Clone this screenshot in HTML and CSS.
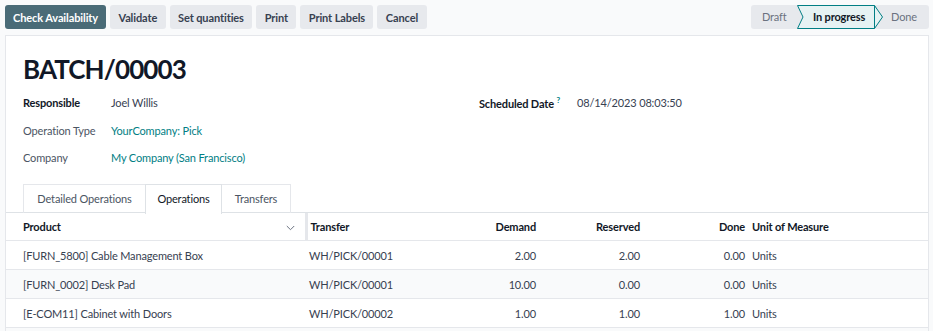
FILE: index.html
```html
<!DOCTYPE html>
<html>
<head>
<meta charset="utf-8">
<link rel="stylesheet" href="styles.css">
</head>
<body>
<div class="control-panel">
  <div class="actions">
    <button class="btn btn-primary">Check Availability</button>
    <button class="btn">Validate</button>
    <button class="btn">Set quantities</button>
    <button class="btn">Print</button>
    <button class="btn">Print Labels</button>
    <button class="btn">Cancel</button>
  </div>
  <div class="statusbar">
    <span class="stage stage-draft">Draft</span>
    <span class="stage stage-current">
      <svg class="stage-shape" width="88" height="24" viewBox="0 0 88 24">
        <path d="M0.5,0.5 L77.5,0.5 L85.5,12 L77.5,23.5 L0.5,23.5 L6,12 Z" fill="#e6f2f3" stroke="#017e84" stroke-width="1"/>
        <path d="M77.5,0.5 L77.5,23.5" stroke="#017e84" stroke-width="1"/>
      </svg>
      <span class="stage-label">In progress</span>
    </span>
    <span class="stage stage-done">Done</span>
  </div>
</div>

<div class="sheet">
  <h1 class="title">BATCH/00003</h1>
  <div class="groups">
    <div class="group group-left">
      <div class="field"><span class="label label-strong">Responsible</span><span class="value">Joel Willis</span></div>
      <div class="field"><span class="label">Operation Type</span><span class="value link">YourCompany: Pick</span></div>
      <div class="field"><span class="label">Company</span><span class="value link">My Company (San Francisco)</span></div>
    </div>
    <div class="group group-right">
      <div class="field"><span class="label label-strong label-wide">Scheduled Date <sup class="help">?</sup></span><span class="value">08/14/2023 08:03:50</span></div>
    </div>
  </div>

  <div class="tabs">
    <span class="tab tab-detailed">Detailed Operations</span>
    <span class="tab tab-active">Operations</span>
    <span class="tab tab-transfers">Transfers</span>
  </div>

  <table class="grid">
    <colgroup>
      <col class="c-product">
      <col class="c-transfer">
      <col class="c-demand">
      <col class="c-reserved">
      <col class="c-done">
      <col class="c-uom">
    </colgroup>
    <thead>
      <tr>
        <th class="th-product"><span>Product</span>
          <svg class="chev" width="9" height="6" viewBox="0 0 9 6"><path d="M0.8,1 L4.5,4.7 L8.2,1" fill="none" stroke="#6b7280" stroke-width="1"/></svg>
        </th>
        <th class="th-transfer">Transfer</th>
        <th class="num">Demand</th>
        <th class="num">Reserved</th>
        <th class="num">Done</th>
        <th class="uom">Unit of Measure</th>
      </tr>
    </thead>
    <tbody>
      <tr>
        <td class="td-product">[FURN_5800] Cable Management Box</td>
        <td class="td-transfer">WH/PICK/00001</td>
        <td class="num">2.00</td>
        <td class="num">2.00</td>
        <td class="num">0.00</td>
        <td class="uom">Units</td>
      </tr>
      <tr class="striped">
        <td class="td-product">[FURN_0002] Desk Pad</td>
        <td class="td-transfer">WH/PICK/00001</td>
        <td class="num">10.00</td>
        <td class="num">0.00</td>
        <td class="num">0.00</td>
        <td class="uom">Units</td>
      </tr>
      <tr>
        <td class="td-product">[E-COM11] Cabinet with Doors</td>
        <td class="td-transfer">WH/PICK/00002</td>
        <td class="num">1.00</td>
        <td class="num">1.00</td>
        <td class="num">1.00</td>
        <td class="uom">Units</td>
      </tr>
      <tr class="striped">
        <td class="td-product">&nbsp;</td>
        <td></td><td></td><td></td><td></td><td></td>
      </tr>
    </tbody>
  </table>
</div>
</body>
</html>
```

FILE: styles.css
```css
* { box-sizing: border-box; }
html, body { margin: 0; padding: 0; }
body {
  background: #f9fafb;
  font-family: "Lato", "Noto Sans", sans-serif;
  font-size: 11px;
  letter-spacing: -0.15px;
  color: #374151;
  width: 933px;
  height: 331px;
  overflow: hidden;
}
.control-panel {
  display: flex;
  justify-content: space-between;
  align-items: center;
  padding: 5px 4px 6px 5px;
  height: 35px;
}
.actions { display: flex; gap: 4px; }
.btn {
  font-family: inherit;
  font-size: 11px;
  letter-spacing: -0.1px;
  font-weight: 700;
  color: #374151;
  background: #e7e9ed;
  border: none;
  border-radius: 3px;
  height: 24px;
  padding: 0 8.4px;
  cursor: pointer;
}
.btn-primary { background: #4a6b77; color: #fff; padding: 0 8px; }
.statusbar {
  display: flex;
  align-items: center;
  background: #e7e9ed;
  border-radius: 3px;
  height: 24px;
  width: 178px;
}
.stage {
  color: #6b7280;
  line-height: 24px;
  white-space: nowrap;
}
.stage-draft { width: 46px; padding-left: 11px; }
.stage-current {
  position: relative;
  width: 88px;
  height: 24px;
  padding-left: 16px;
  color: #111827;
  font-weight: 700;
}
.stage-shape { position: absolute; left: 0; top: 0; }
.stage-label { position: relative; }
.stage-done { padding-left: 6px; }

.sheet {
  margin: 0 4px 0 5px;
  background: #fff;
  border: 1px solid #e5e7eb;
  border-bottom: none;
  height: 296px;
  overflow: hidden;
}
.title {
  margin: 0;
  padding: 17px 0 0 17px;
  font-size: 26px;
  letter-spacing: -0.9px;
  font-weight: 700;
  color: #111827;
  line-height: 32px;
  height: 53px;
}
.groups { display: flex; padding-left: 17px; }
.group-left { width: 456px; }
.field { display: flex; align-items: center; height: 27.5px; white-space: nowrap; }
.label { width: 88px; color: #4b5563; }
.label-wide { width: 98px; }
.label-strong { color: #111827; font-weight: 700; }
.value { color: #374151; }
.link { color: #017e84; }
.help { color: #017e84; font-size: 8px; vertical-align: 5px; }

.tabs {
  display: flex;
  margin-top: 12px;
  padding-left: 17px;
  border-bottom: 1px solid #dee2e6;
  height: 29px;
}
.tab {
  height: 29px;
  line-height: 28px;
  border: 1px solid #e5e7eb;
  border-bottom: none;
  color: #4b5563;
  text-align: center;
}
.tab-detailed { width: 122px; border-right: none; }
.tab-active { width: 77px; background: #fff; color: #111827; border-color: #dee2e6; margin-bottom: -1px; height: 30px; }
.tab-transfers { width: 69px; border-left: none; }

.grid {
  width: 100%;
  border-collapse: collapse;
  table-layout: fixed;
}
.c-product { width: 300px; }
.c-transfer { width: 134px; }
.c-demand { width: 100px; }
.c-reserved { width: 104px; }
.c-done { width: 105px; }
.grid th, .grid td {
  height: 29px;
  padding: 0 4px;
  border-bottom: 1px solid #e5e7eb;
  white-space: nowrap;
  overflow: hidden;
  text-align: left;
}
.grid th { height: 28px; font-weight: 700; color: #111827; }
.grid .num { text-align: right; }
.th-product {
  padding-left: 17px !important;
  border-right: 3px solid #e5e7eb;
}
.th-product span { display: inline-block; }
.chev { float: right; margin-top: 5px; margin-right: 6px; }
.td-product { padding-left: 17px !important; }
.td-transfer, .th-transfer { padding-left: 3px !important; }
.uom { padding-left: 3px !important; }
.striped td { background: #f9fafb; }
```
